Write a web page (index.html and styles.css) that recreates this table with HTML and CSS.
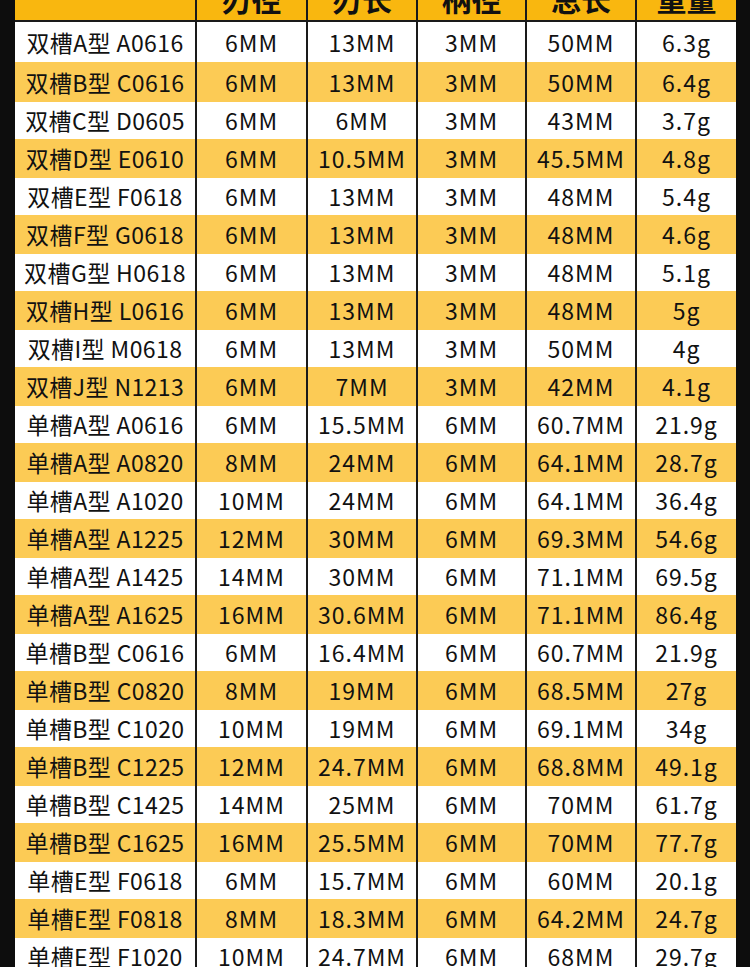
FILE: index.html
```html
<!DOCTYPE html>
<html lang="zh">
<head>
<meta charset="utf-8">
<title>规格表</title>
<link rel="stylesheet" href="styles.css">
</head>
<body>
<div class="sheet">
<table class="spec">
<colgroup>
<col class="c1"><col class="c2"><col class="c3"><col class="c4"><col class="c5"><col class="c6">
</colgroup>
<thead>
<tr><th></th><th>刃径</th><th>刃长</th><th>柄径</th><th>总长</th><th>重量</th></tr>
</thead>
<tbody>
<tr><td>双槽A型 A0616</td><td>6MM</td><td>13MM</td><td>3MM</td><td>50MM</td><td>6.3g</td></tr>
<tr><td>双槽B型 C0616</td><td>6MM</td><td>13MM</td><td>3MM</td><td>50MM</td><td>6.4g</td></tr>
<tr><td>双槽C型 D0605</td><td>6MM</td><td>6MM</td><td>3MM</td><td>43MM</td><td>3.7g</td></tr>
<tr><td>双槽D型 E0610</td><td>6MM</td><td>10.5MM</td><td>3MM</td><td>45.5MM</td><td>4.8g</td></tr>
<tr><td>双槽E型 F0618</td><td>6MM</td><td>13MM</td><td>3MM</td><td>48MM</td><td>5.4g</td></tr>
<tr><td>双槽F型 G0618</td><td>6MM</td><td>13MM</td><td>3MM</td><td>48MM</td><td>4.6g</td></tr>
<tr><td>双槽G型 H0618</td><td>6MM</td><td>13MM</td><td>3MM</td><td>48MM</td><td>5.1g</td></tr>
<tr><td>双槽H型 L0616</td><td>6MM</td><td>13MM</td><td>3MM</td><td>48MM</td><td>5g</td></tr>
<tr><td>双槽I型 M0618</td><td>6MM</td><td>13MM</td><td>3MM</td><td>50MM</td><td>4g</td></tr>
<tr><td>双槽J型 N1213</td><td>6MM</td><td>7MM</td><td>3MM</td><td>42MM</td><td>4.1g</td></tr>
<tr><td>单槽A型 A0616</td><td>6MM</td><td>15.5MM</td><td>6MM</td><td>60.7MM</td><td>21.9g</td></tr>
<tr><td>单槽A型 A0820</td><td>8MM</td><td>24MM</td><td>6MM</td><td>64.1MM</td><td>28.7g</td></tr>
<tr><td>单槽A型 A1020</td><td>10MM</td><td>24MM</td><td>6MM</td><td>64.1MM</td><td>36.4g</td></tr>
<tr><td>单槽A型 A1225</td><td>12MM</td><td>30MM</td><td>6MM</td><td>69.3MM</td><td>54.6g</td></tr>
<tr><td>单槽A型 A1425</td><td>14MM</td><td>30MM</td><td>6MM</td><td>71.1MM</td><td>69.5g</td></tr>
<tr><td>单槽A型 A1625</td><td>16MM</td><td>30.6MM</td><td>6MM</td><td>71.1MM</td><td>86.4g</td></tr>
<tr><td>单槽B型 C0616</td><td>6MM</td><td>16.4MM</td><td>6MM</td><td>60.7MM</td><td>21.9g</td></tr>
<tr><td>单槽B型 C0820</td><td>8MM</td><td>19MM</td><td>6MM</td><td>68.5MM</td><td>27g</td></tr>
<tr><td>单槽B型 C1020</td><td>10MM</td><td>19MM</td><td>6MM</td><td>69.1MM</td><td>34g</td></tr>
<tr><td>单槽B型 C1225</td><td>12MM</td><td>24.7MM</td><td>6MM</td><td>68.8MM</td><td>49.1g</td></tr>
<tr><td>单槽B型 C1425</td><td>14MM</td><td>25MM</td><td>6MM</td><td>70MM</td><td>61.7g</td></tr>
<tr><td>单槽B型 C1625</td><td>16MM</td><td>25.5MM</td><td>6MM</td><td>70MM</td><td>77.7g</td></tr>
<tr><td>单槽E型 F0618</td><td>6MM</td><td>15.7MM</td><td>6MM</td><td>60MM</td><td>20.1g</td></tr>
<tr><td>单槽E型 F0818</td><td>8MM</td><td>18.3MM</td><td>6MM</td><td>64.2MM</td><td>24.7g</td></tr>
<tr><td>单槽E型 F1020</td><td>10MM</td><td>24.7MM</td><td>6MM</td><td>68MM</td><td>29.7g</td></tr>
</tbody>
</table>
</div>
</body>
</html>
```

FILE: styles.css
```css
html, body {
  margin: 0;
  padding: 0;
  background: #0d0d0d;
  overflow: hidden;
}
.sheet {
  padding: 0 14px 0 15px;
}
.spec {
  width: 721px;
  table-layout: fixed;
  border-collapse: collapse;
  margin-top: -24px;
  font-family: "Noto Sans CJK SC", "Noto Sans", sans-serif;
  color: #111;
}
.c1 { width: 181px; }
.c2 { width: 111px; }
.c3 { width: 110px; }
.c4 { width: 109px; }
.c5 { width: 110px; }
.c6 { width: 100px; }
.spec th, .spec td {
  padding: 0;
  text-align: center;
  white-space: nowrap;
  border-left: 2px solid #1a1a1a;
}
.spec th:first-child, .spec td:first-child {
  border-left: none;
}
.spec th {
  height: 44px;
  background: #f9b70f;
  font-size: 30px;
  font-weight: 700;
  line-height: 1;
  border-bottom: 2px solid #1a1a1a;
}
.spec td {
  font-size: 23px;
  line-height: 1;
  font-weight: 400;
  letter-spacing: 1px;
}
.spec td:first-child {
  letter-spacing: 0.4px;
}
.spec tbody tr:nth-child(odd) td {
  height: 37px;
  background: #ffffff;
}
.spec tbody tr:nth-child(even) td {
  height: 39px;
  background: #fccb55;
}
.spec tbody tr:nth-child(1) td,
.spec tbody tr:nth-child(2) td {
  height: 40px;
}
```
